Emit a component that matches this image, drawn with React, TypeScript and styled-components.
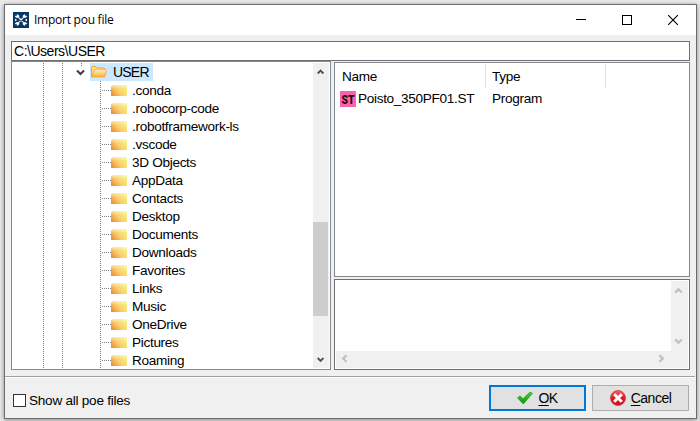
import React from "react";
import styled, { createGlobalStyle } from "styled-components";

const GlobalStyle = createGlobalStyle`
  * { box-sizing: border-box; }
  body { margin: 0; background: #e9e9e9; overflow: hidden; }
`;

const Desktop = styled.div`
  width: 700px;
  height: 421px;
  padding: 4px 3px 2px 4px;
  background: #ececec;
  overflow: hidden;
  font: 13.6px/18px "Liberation Sans", Arial, sans-serif;
  letter-spacing: -0.32px;
  color: #000;
`;

const Dialog = styled.div`
  width: 693px;
  height: 415px;
  display: flex;
  flex-direction: column;
  border: 1px solid #6d6d6d;
  background: #f0f0f0;
  box-shadow: 0 1px 5px rgba(0, 0, 0, 0.45);
`;

const TitleBar = styled.div`
  height: 30px;
  flex: none;
  display: flex;
  align-items: center;
  padding-left: 8px;
  background: #fff;
  svg { display: block; }
`;

const Title = styled.div`
  flex: 1;
  margin-left: 5px;
  font: 12px/16px "Open Sans", "Noto Sans", sans-serif;
  letter-spacing: -0.25px;
`;

const WindowButton = styled.div`
  width: 46px;
  height: 30px;
  display: flex;
  align-items: center;
  justify-content: center;
`;

const PathField = styled.div`
  height: 20px;
  flex: none;
  width: 679px;
  margin: 6px 0 0 6px;
  padding-left: 2px;
  border: 1px solid #6f6f6f;
  background: #fff;
  font-size: 14px;
  line-height: 19px;
  letter-spacing: -0.48px;
`;

const Panels = styled.div`
  display: flex;
  height: 309px;
  flex: none;
  margin-left: 6px;
`;

const TreePanel = styled.div`
  width: 320px;
  display: flex;
  padding: 1px 1px 1px 0;
  border: 1px solid #828790;
  background: #fff;
`;

const Tree = styled.div`
  position: relative;
  width: 301px;
  overflow: hidden;
`;

const Guide = styled.div<{ $x: number; $top?: number; $height: number }>`
  position: absolute;
  left: ${(p) => p.$x}px;
  top: ${(p) => p.$top ?? 0}px;
  width: 1px;
  height: ${(p) => p.$height}px;
  background: repeating-linear-gradient(#808080 0 1px, transparent 1px 2px);
`;

const RootRow = styled.div`
  height: 18px;
  display: flex;
  align-items: center;
  padding-left: 64px;
  svg { display: block; flex: none; }
`;

const RootLabel = styled.div`
  display: flex;
  align-items: center;
  width: 63px;
  height: 18px;
  margin-left: 5px;
  padding-left: 1px;
  background: #cce8ff;
  span { margin-left: 6px; font-size: 14px; letter-spacing: -0.8px; }
`;

const Row = styled.div`
  height: 18px;
  display: flex;
  align-items: center;
  padding-left: 90px;
  white-space: nowrap;
  svg { display: block; flex: none; }
`;

const Branch = styled.div`
  width: 9px;
  height: 1px;
  background: repeating-linear-gradient(90deg, #808080 0 1px, transparent 1px 2px);
`;

const RowText = styled.span`
  margin-left: 4px;
  padding-top: 1px;
`;

const VScroll = styled.div<{ $width: number }>`
  width: ${(p) => p.$width}px;
  flex: none;
  display: flex;
  flex-direction: column;
  align-items: flex-start;
  justify-content: space-between;
  padding: 4px 0 4px 3px;
  background: #f0f0f0;
  svg { display: block; }
`;

const TreeScroll = styled(VScroll)`
  justify-content: flex-start;
  padding: 4px 0 4px;
  svg { margin-left: 3px; }
`;

const Thumb = styled.div`
  width: 15px;
  height: 94px;
  margin-top: 145px;
  margin-bottom: 39px;
  background: #cdcdcd;
  flex: none;
`;

const RightColumn = styled.div`
  width: 356px;
  margin-left: 3px;
  display: flex;
  flex-direction: column;
`;

const FileList = styled.div`
  height: 215px;
  margin-top: 1px;
  border: 1px solid #828790;
  background: #fff;
`;

const ListHeader = styled.div`
  display: grid;
  grid-template-columns: 151px 120px;
  height: 25px;
  padding-top: 1px;
`;

const HeaderCell = styled.div<{ $inset: number }>`
  height: 24px;
  padding-left: ${(p) => p.$inset}px;
  border-right: 1px solid #e5e5e5;
  line-height: 26px;
`;

const FileRow = styled.div`
  display: grid;
  grid-template-columns: 151px 1fr;
  height: 18px;
  margin-top: 1px;
`;

const FileCell = styled.div<{ $inset: number }>`
  display: flex;
  align-items: center;
  gap: 2px;
  padding-left: ${(p) => p.$inset}px;
  white-space: nowrap;
  span { padding-top: 1px; }
`;

const Preview = styled.div`
  height: 91px;
  margin-top: 2px;
  padding: 1px;
  display: flex;
  flex-direction: column;
  border: 1px solid #6f6f6f;
  background: #fff;
`;

const PreviewBody = styled.div`
  height: 70px;
  display: flex;
  justify-content: flex-end;
`;

const HScroll = styled.div`
  height: 17px;
  display: flex;
  align-items: center;
  justify-content: space-between;
  padding: 0 21px 2px 4px;
  background: #f0f0f0;
  svg { display: block; }
`;

const Divider = styled.div`
  height: 2px;
  flex: none;
  margin: 6px 1px 0 0;
  background: #fff;
  border-top: 1px solid #a0a0a0;
`;

const Footer = styled.div`
  display: flex;
  align-items: flex-start;
  padding: 7px 7px 0 8px;
`;

const CheckLabel = styled.label`
  display: flex;
  align-items: center;
  flex: 1;
  margin-top: 6px;
  height: 18px;
  letter-spacing: -0.26px;
`;

const CheckBox = styled.span`
  width: 13px;
  height: 13px;
  margin-right: 3px;
  border: 1px solid #333;
  background: #fff;
`;

const CheckText = styled.span`
  padding-top: 1px;
`;

const Button = styled.button<{ $primary?: boolean }>`
  width: 97px;
  height: 26px;
  margin: 0 0 0 ${(p) => (p.$primary ? 0 : 6)}px;
  padding: 0;
  display: flex;
  align-items: center;
  justify-content: center;
  gap: 5px;
  border: ${(p) => (p.$primary ? "2px solid #0078d7" : "1px solid #adadad")};
  background: #e1e1e1;
  color: #000;
  font: 14px/18px "Liberation Sans", Arial, sans-serif;
  letter-spacing: ${(p) => (p.$primary ? -0.6 : -0.5)}px;
  svg { display: block; }
  u { text-underline-offset: 2px; text-decoration-thickness: 1px; }
`;

const angles = { up: 180, down: 0, left: 90, right: 270 };

function Chevron({ dir, color = "#555" }: { dir: keyof typeof angles; color?: string }) {
  return (
    <svg width="9" height="9" viewBox="0 0 9 9">
      <path
        d="M1 2.5 4.5 6 8 2.5"
        fill="none"
        stroke={color}
        strokeWidth="2.1"
        transform={`rotate(${angles[dir]} 4.5 4.5)`}
      />
    </svg>
  );
}

function ScrollChevron({ dir, color = "#505050" }: { dir: keyof typeof angles; color?: string }) {
  return (
    <svg width="10" height="11" viewBox="0 0 10 11">
      <path
        d="M1.2 3.5 4.5 6.8 7.8 3.5"
        fill="none"
        stroke={color}
        strokeWidth="2.2"
        transform={`rotate(${angles[dir]} 4.5 5.5)`}
      />
    </svg>
  );
}

function AppIcon() {
  return (
    <svg width="16" height="16" viewBox="0 0 16 16">
      <rect width="16" height="16" fill="#073763" />
      <path
        d="M4 2.5 6 3.5v2l1 1H6L5 5.5H3L2 4l2 .3zM12 2.5 10 3.5v2l-1 1h1l1-1h2L14 4l-2 .3zM4 13.5l2-1v-2l1-1H6l-1 1H3L2 12l2-.3zM12 13.5l-2-1v-2l-1-1h1l1 1h2l1 1.5-2-.3z"
        fill="#fff"
        stroke="#fff"
        strokeWidth=".5"
      />
      <path d="M2 6.8 4.3 8 2 9.2zM14 6.8 11.7 8 14 9.2z" fill="#fff" />
      <path d="M6.5 6.5 9.5 9.5M9.5 6.5 6.5 9.5" stroke="#fff" strokeWidth="1.1" />
    </svg>
  );
}

function TypeBadge() {
  return (
    <svg width="16" height="16" viewBox="0 0 16 16">
      <rect width="16" height="16" fill="#fa62ae" />
      <text
        x="1.5"
        y="12.8"
        textLength="13"
        lengthAdjust="spacingAndGlyphs"
        fontFamily="Roboto, sans-serif"
        fontWeight="900"
        fontSize="13.4"
        letterSpacing="0"
        fill="#1c0c15"
      >
        ST
      </text>
    </svg>
  );
}

function Folder() {
  return (
    <svg width="17" height="18" viewBox="0 0 17 18">
      <defs>
        <linearGradient id="folder" x1="0" y1=".8" x2="1" y2=".2">
          <stop offset="0" stopColor="#ec8f45" />
          <stop offset=".45" stopColor="#fbd066" />
          <stop offset="1" stopColor="#f4f08c" />
        </linearGradient>
        <linearGradient id="folderShine" x1="0" y1="0" x2="0" y2="1">
          <stop offset="0" stopColor="#fff" stopOpacity=".45" />
          <stop offset="1" stopColor="#fff" stopOpacity="0" />
        </linearGradient>
      </defs>
      <path d="M0 5h6l1-1h9v11H0z" fill="url(#folder)" />
      <path d="M0 5h6l1-1h9v4H0z" fill="url(#folderShine)" />
      <path d="M1 4.5h5" stroke="#e2e4e3" />
    </svg>
  );
}

function OpenFolder() {
  return (
    <svg width="16" height="18" viewBox="0 0 16 18">
      <defs>
        <linearGradient id="open" x1="0" y1="0" x2="0" y2="1">
          <stop offset="0" stopColor="#fff0bd" />
          <stop offset="1" stopColor="#ffad35" />
        </linearGradient>
      </defs>
      <path d="M.5 13.5V4.5l1-1H5l1.5 1.5H13l.8 1V13.5z" fill="#ffd983" stroke="#eda53a" />
      <path d="M.8 14 3.5 7H15.5l-2 7z" fill="url(#open)" stroke="#f3a535" strokeWidth=".8" />
      <path d="M4 7.5H15" stroke="#fff3cb" strokeWidth=".7" />
    </svg>
  );
}

function CheckIcon() {
  return (
    <svg width="16" height="14" viewBox="0 0 16 14">
      <defs>
        <linearGradient id="tick" x1="0" y1="0" x2="0" y2="1">
          <stop offset="0" stopColor="#43cf2c" />
          <stop offset="1" stopColor="#089711" />
        </linearGradient>
      </defs>
      <path d="M.6 7 3 4.8 6 7.7 12.7 1.2 15.5 2.2 6.3 13z" fill="url(#tick)" stroke="#17a416" strokeWidth=".7" />
    </svg>
  );
}

function CancelIcon() {
  return (
    <svg width="16" height="16" viewBox="0 0 16 16">
      <defs>
        <linearGradient id="cancel" x1="0" y1="0" x2="0" y2="1">
          <stop offset="0" stopColor="#f16a6a" />
          <stop offset=".5" stopColor="#dc1821" />
          <stop offset="1" stopColor="#ce121b" />
        </linearGradient>
      </defs>
      <circle cx="8" cy="8" r="7.5" fill="url(#cancel)" stroke="#d33740" strokeWidth=".8" />
      <path d="M4.2 4.2 11.8 11.8M11.8 4.2 4.2 11.8" stroke="#fff" strokeWidth="3" />
    </svg>
  );
}

const folders = [
  ".conda", ".robocorp-code", ".robotframework-ls", ".vscode", "3D Objects", "AppData",
  "Contacts", "Desktop", "Documents", "Downloads", "Favorites", "Links", "Music",
  "OneDrive", "Pictures", "Roaming",
];

export default function App() {
  return (
    <Desktop>
      <GlobalStyle />
      <Dialog>
        <TitleBar>
          <AppIcon />
          <Title>Import pou file</Title>
          <WindowButton>
            <svg width="10" height="10"><path d="M0 4.5h10" stroke="#000" /></svg>
          </WindowButton>
          <WindowButton>
            <svg width="10" height="10"><rect x=".5" y=".5" width="9" height="9" fill="none" stroke="#000" /></svg>
          </WindowButton>
          <WindowButton>
            <svg width="10" height="10"><path d="M0 0 10 10M10 0 0 10" stroke="#000" strokeWidth="1.1" /></svg>
          </WindowButton>
        </TitleBar>
        <PathField>C:\Users\USER</PathField>
        <Panels>
          <TreePanel>
            <Tree>
              <Guide $x={31} $height={305} />
              <Guide $x={50} $height={305} />
              <Guide $x={69} $height={3} />
              <Guide $x={88} $top={18} $height={287} />
              <RootRow>
                <Chevron dir="down" color="#404040" />
                <RootLabel><OpenFolder /><span>USER</span></RootLabel>
              </RootRow>
              {folders.map((name) => (
                <Row key={name}>
                  <Branch />
                  <Folder />
                  <RowText>{name}</RowText>
                </Row>
              ))}
            </Tree>
            <TreeScroll $width={16}>
              <ScrollChevron dir="up" />
              <Thumb />
              <ScrollChevron dir="down" />
            </TreeScroll>
          </TreePanel>
          <RightColumn>
            <FileList>
              <ListHeader>
                <HeaderCell $inset={7}>Name</HeaderCell>
                <HeaderCell $inset={6}>Type</HeaderCell>
              </ListHeader>
              <FileRow>
                <FileCell $inset={5}>
                  <TypeBadge />
                  <span>Poisto_350PF01.ST</span>
                </FileCell>
                <FileCell $inset={6}><span>Program</span></FileCell>
              </FileRow>
            </FileList>
            <Preview>
              <PreviewBody>
                <VScroll $width={17}>
                  <ScrollChevron dir="up" color="#bfbfbf" />
                  <ScrollChevron dir="down" color="#bfbfbf" />
                </VScroll>
              </PreviewBody>
              <HScroll>
                <ScrollChevron dir="left" color="#bfbfbf" />
                <ScrollChevron dir="right" color="#bfbfbf" />
              </HScroll>
            </Preview>
          </RightColumn>
        </Panels>
        <Divider />
        <Footer>
          <CheckLabel><CheckBox /><CheckText>Show all poe files</CheckText></CheckLabel>
          <Button $primary><CheckIcon /><span><u>O</u>K</span></Button>
          <Button><CancelIcon /><span><u>C</u>ancel</span></Button>
        </Footer>
      </Dialog>
    </Desktop>
  );
}
